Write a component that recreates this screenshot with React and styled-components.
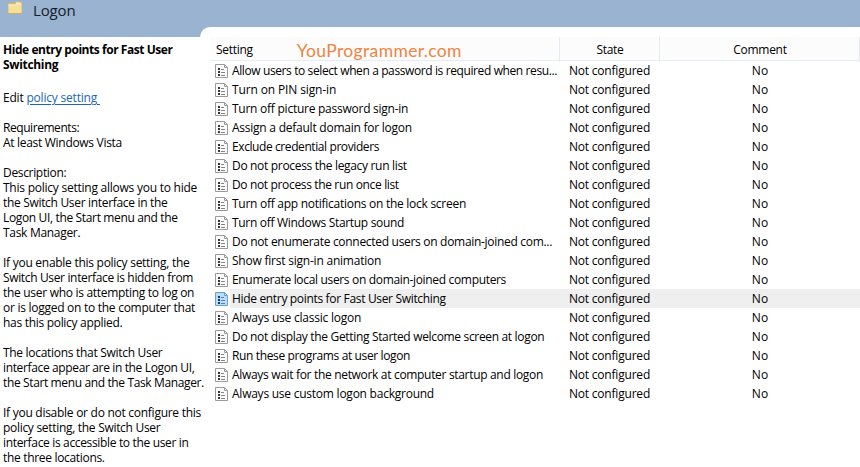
import styled, { createGlobalStyle } from 'styled-components'

const GlobalStyle = createGlobalStyle`
  * {
    box-sizing: border-box;
  }

  body {
    margin: 0;
    background: #fff;
    color: #000;
    font: 12px/15px 'Open Sans', 'Noto Sans', sans-serif;
    overflow: hidden;
  }
`

const Window = styled.div`
  width: 860px;
  height: 467px;
  display: flex;
  flex-direction: column;
  overflow: hidden;
  background: #9ab3d0;
`

const TitleBar = styled.header`
  height: 27px;
  flex: none;
  display: flex;
  align-items: flex-start;
  padding-left: 7px;
`

const Title = styled.h1`
  margin: 0 0 0 10px;
  font-size: 15px;
  font-weight: 400;
  line-height: 20px;
  letter-spacing: -0.15px;
  color: #15202c;
`

const Body = styled.div`
  flex: 1;
  min-height: 0;
  display: flex;
`

// long lines run a few pixels past the column, so it sits above the panel
const Sidebar = styled.aside`
  z-index: 1;
  width: 200px;
  flex: none;
  margin-top: 10px;
  padding: 5px 0 0 3px;
  background: #fff;
`

const Block = styled.section`
  margin-bottom: ${(p) => p.$gap || 15}px;
`

const Line = styled.div`
  height: 15px;
  white-space: pre;
  font-weight: ${(p) => (p.$bold ? 700 : 400)};
  letter-spacing: ${(p) => p.$track || 0}px;
`

const Link = styled.a`
  color: #1a66b8;
  text-decoration: underline;
  text-underline-offset: 2px;
`

const Panel = styled.main`
  flex: 1;
  min-width: 0;
  padding: 10px 0 0 10px;
  border-top-left-radius: 10px;
  background: #fff;
`

// the strip below the rounded corner belongs to the white page area
const PanelBack = styled.div`
  flex: 1;
  min-width: 0;
  display: flex;
  background: linear-gradient(#9ab3d0 10px, #fff 10px);
`

const columns = '349px 100px 201px'

const HeaderRow = styled.div`
  display: grid;
  grid-template-columns: ${columns};
  height: 24px;
  background: #fcfcfc;
  border-bottom: 1px solid #e6edf4;
`

const HeaderCell = styled.div`
  display: flex;
  align-items: center;
  justify-content: ${(p) => (p.$left ? 'flex-start' : 'center')};
  padding-left: ${(p) => (p.$left ? 6 : 1)}px;
  border-left: ${(p) => (p.$left ? 0 : 1)}px solid #e3ebf3;
  letter-spacing: -0.3px;

  &:last-child {
    border-right: 1px solid #e3ebf3;
  }
`

const Watermark = styled.span`
  margin: 3px 0 0 44px;
  font: 17.5px/22px Lato, sans-serif;
  letter-spacing: 0.35px;
  color: #f08441;
`

const Row = styled.div`
  display: grid;
  grid-template-columns: ${columns};
  height: 19px;
  line-height: 19px;
  background: ${(p) =>
    p.$selected ? 'linear-gradient(90deg, #fff 20px, #efefef 20px)' : '#fff'};
`

const Cell = styled.div`
  display: flex;
  align-items: center;
  justify-content: ${(p) => (p.$left ? 'flex-start' : 'center')};
  gap: 4px;
  min-width: 0;
  padding-left: ${(p) => (p.$left ? 5 : 1)}px;
  white-space: nowrap;
  letter-spacing: ${(p) => p.$track || 0}px;

  svg {
    flex: none;
  }
`

const description = [
  [
    ['This policy setting allows you to hide', -0.24],
    ['the Switch User interface in the', -0.32],
    ['Logon UI, the Start menu and the', -0.35],
    ['Task Manager.', -0.3],
  ],
  [
    ['If you enable this policy setting, the', -0.27],
    ['Switch User interface is hidden from', -0.35],
    ['the user who is attempting to log on', -0.3],
    ['or is logged on to the computer that', -0.27],
    ['has this policy applied.', -0.3],
  ],
  [
    ['The locations that Switch User', -0.3],
    ['interface appear are in the Logon UI,', -0.36],
    ['the Start menu and the Task Manager.', -0.37],
  ],
  [
    ['If you disable or do not configure this', -0.27],
    ['policy setting, the Switch User', -0.3],
    ['interface is accessible to the user in', -0.34],
    ['the three locations.', -0.32],
  ],
]

const settings = [
  ['Allow users to select when a password is required when resu...', -0.39],
  ['Turn on PIN sign-in', -0.13],
  ['Turn off picture password sign-in', -0.25],
  ['Assign a default domain for logon', -0.24],
  ['Exclude credential providers', -0.41],
  ['Do not process the legacy run list', -0.32],
  ['Do not process the run once list', -0.35],
  ['Turn off app notifications on the lock screen', -0.27],
  ['Turn off Windows Startup sound', -0.31],
  ['Do not enumerate connected users on domain-joined com...', -0.3],
  ['Show first sign-in animation', -0.22],
  ['Enumerate local users on domain-joined computers', -0.33],
  ['Hide entry points for Fast User Switching', -0.33],
  ['Always use classic logon', -0.22],
  ['Do not display the Getting Started welcome screen at logon', -0.33],
  ['Run these programs at user logon', -0.37],
  ['Always wait for the network at computer startup and logon', -0.32],
  ['Always use custom logon background', -0.24],
]

const selected = 12

function FolderIcon() {
  return (
    <svg width="16" height="15" viewBox="0 0 16 15">
      <path d="M1 3h6.5l1-1.5h5.5v2h1v10.5H1z" fill="#dcb964" />
      <path d="M9 2.5h4.5v1.5H9z" fill="#fffbea" />
      <path d="M1.5 4.5h7l1-1h5v9.5h-13z" fill="#f7e09a" />
      <path d="M1.5 5h7l1-1h5" fill="none" stroke="#fdf1c4" />
      <path d="M1 13.5h14" fill="none" stroke="#cfae66" />
    </svg>
  )
}

function PolicyIcon({ active }) {
  const edge = active ? '#6f9fcb' : '#9a9a9a'
  return (
    <svg width="13" height="16" viewBox="0 0 13 16">
      <path
        d="M.5 1.5h9l3 3v10H.5z"
        fill={active ? '#b9dcf8' : '#fcfcfc'}
        stroke={edge}
      />
      <path d="M9.5 1.5v3h3" fill="none" stroke={edge} />
      <path d="M3 5h2v2H3zM3 8h2v2H3zM3 11h2v2H3z" fill={active ? '#183a60' : '#333'} />
      <path
        d="M6 6.5h3M6 9.5h4M6 12.5h4"
        stroke={active ? '#5484ae' : '#858189'}
        fill="none"
      />
    </svg>
  )
}

export default function App() {
  return (
    <>
      <GlobalStyle />
      <Window>
        <TitleBar>
          <FolderIcon />
          <Title>Logon</Title>
        </TitleBar>
        <Body>
          <Sidebar>
            <Block $gap={18}>
              <Line $bold $track={-0.45}>
                Hide entry points for Fast User
              </Line>
              <Line $bold $track={-0.33}>
                Switching
              </Line>
            </Block>
            <Block>
              <Line $track={-0.2}>
                Edit <Link>policy setting </Link>
              </Line>
            </Block>
            <Block>
              <Line $track={-0.44}>Requirements:</Line>
              <Line $track={-0.3}>At least Windows Vista</Line>
            </Block>
            <Line $track={-0.33}>Description:</Line>
            {description.map((lines, i) => (
              <Block key={i}>
                {lines.map(([text, track]) => (
                  <Line key={text} $track={track}>
                    {text}
                  </Line>
                ))}
              </Block>
            ))}
          </Sidebar>
          <PanelBack>
            <Panel>
              <HeaderRow>
                <HeaderCell $left>
                  Setting
                  <Watermark>YouProgrammer.com</Watermark>
                </HeaderCell>
                <HeaderCell>State</HeaderCell>
                <HeaderCell>Comment</HeaderCell>
              </HeaderRow>
              {settings.map(([name, track], i) => (
                <Row key={name} $selected={i === selected}>
                  <Cell $left $track={track}>
                    <PolicyIcon active={i === selected} />
                    {name}
                  </Cell>
                  <Cell $track={-0.2}>Not configured</Cell>
                  <Cell>No</Cell>
                </Row>
              ))}
            </Panel>
          </PanelBack>
        </Body>
      </Window>
    </>
  )
}
